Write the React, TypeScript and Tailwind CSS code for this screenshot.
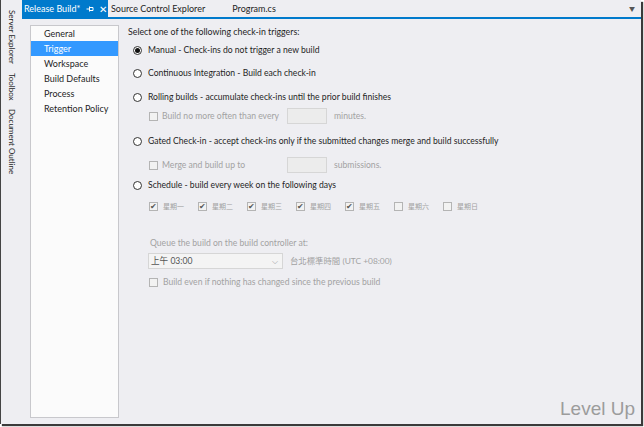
import type { ReactNode } from "react";

const font = { fontFamily: 'Lato, "Noto Sans CJK TC", sans-serif' };

function Radio({ on, children }: { on?: boolean; children: ReactNode }) {
  return (
    <div className="flex h-[14px] items-center whitespace-nowrap text-[8.6px] text-[#1e1e1e]">
      <span className="ml-[5px] mr-[6px] flex h-[9px] w-[9px] shrink-0 items-center justify-center rounded-full border border-[#333] bg-white">
        {on && <span className="h-[5px] w-[5px] rounded-full bg-[#111]" />}
      </span>
      {children}
    </div>
  );
}

function Box({ checked }: { checked?: boolean }) {
  return (
    <span className="flex h-[9px] w-[9px] shrink-0 items-center justify-center border border-[#b4b4b4] bg-[#f2f2f2] text-[8px] leading-none text-[#555]">
      {checked && "✔"}
    </span>
  );
}

function SubRow({ label, unit, mt }: { label: string; unit: string; mt: string }) {
  return (
    <div className={`flex h-[16px] items-center whitespace-nowrap text-[8.6px] text-[#a2a2a2] ${mt}`}>
      <span className="ml-[21px]"><Box /></span>
      <span className="ml-[4px] w-[125px] shrink-0">{label}</span>
      <span className="h-[16px] w-[40px] shrink-0 border border-[#d6d6d6] bg-[#ececec]" />
      <span className="ml-[7px]">{unit}</span>
    </div>
  );
}

const days: [string, boolean][] = [
  ["星期一", true],
  ["星期二", true],
  ["星期三", true],
  ["星期四", true],
  ["星期五", true],
  ["星期六", false],
  ["星期日", false],
];

const pages = ["General", "Trigger", "Workspace", "Build Defaults", "Process", "Retention Policy"];

export default function App() {
  return (
    <div className="h-[427px] w-[644px] bg-white" style={font}>
      <div className="relative flex h-[424px] w-[641px] border-l border-[#444] bg-[#eeeef2] shadow-[2px_2px_1px_#3a3a3a]">
        {/* tool window strip */}
        <div className="flex w-[21px] shrink-0 flex-col items-center gap-[9px] pt-[10px] text-[8px] text-[#1e1e1e]">
          <span className="whitespace-nowrap [writing-mode:vertical-rl]">Server Explorer</span>
          <span className="whitespace-nowrap [writing-mode:vertical-rl]">Toolbox</span>
          <span className="whitespace-nowrap [writing-mode:vertical-rl]">Document Outline</span>
        </div>

        <div className="flex flex-1 flex-col">
          {/* document tabs */}
          <div className="flex h-[19px] items-stretch whitespace-nowrap border-b-2 border-[#007acc] pr-[5px]">
            <div className="flex w-[86px] items-center bg-[#007acc] pl-[2px] text-[9px] text-white">
              <span>Release Build*</span>
              <svg className="ml-[6px]" width="8" height="8" viewBox="0 0 8 8" fill="none" stroke="white" strokeWidth="1">
                <path d="M0.5 4h3M3.5 1.5v5M3.5 2.5h3.5v3H3.5" />
              </svg>
              <span className="ml-[5px] text-[10px] leading-none">✕</span>
            </div>
            <div className="ml-[3px] flex items-center text-[9px] text-[#1e1e1e]">Source Control Explorer</div>
            <div className="ml-[27px] flex items-center text-[9px] text-[#1e1e1e]">Program.cs</div>
            <div className="ml-auto flex items-center pr-[1px] text-[6px] text-[#555]">▼</div>
          </div>

          <div className="flex flex-1 pb-[6px] pl-[8px] pt-[6px]">
            {/* page list */}
            <div className="w-[89px] shrink-0 border border-[#c8c8cc] bg-[#fbfbfb] text-[9px] text-[#1e1e1e]">
              {pages.map((p) => (
                <div
                  key={p}
                  className={`flex h-[15px] items-center whitespace-nowrap pl-[13px] ${p === "Trigger" ? "bg-[#3399ff] text-white" : ""}`}
                >
                  {p}
                </div>
              ))}
            </div>

            {/* trigger settings */}
            <div className="flex flex-1 flex-col pl-[9px]">
              <div className="flex h-[14px] items-center text-[8.8px] text-[#1e1e1e]">
                Select one of the following check-in triggers:
              </div>
              <div className="mt-[4px]"><Radio on>Manual - Check-ins do not trigger a new build</Radio></div>
              <div className="mt-[9px]"><Radio>Continuous Integration - Build each check-in</Radio></div>
              <div className="mt-[10px]"><Radio>Rolling builds - accumulate check-ins until the prior build finishes</Radio></div>
              <SubRow label="Build no more often than every" unit="minutes." mt="mt-[4px]" />
              <div className="mt-[10px]">
                <Radio>Gated Check-in - accept check-ins only if the submitted changes merge and build successfully</Radio>
              </div>
              <SubRow label="Merge and build up to" unit="submissions." mt="mt-[9px]" />
              <div className="mt-[5px]"><Radio>Schedule - build every week on the following days</Radio></div>
              <div className="ml-[21px] mt-[7px] flex h-[14px] items-center whitespace-nowrap text-[7px] text-[#a2a2a2]">
                {days.map(([d, c]) => (
                  <div key={d} className="flex w-[49px] items-center gap-[5px]">
                    <Box checked={c} />
                    <span>{d}</span>
                  </div>
                ))}
              </div>
              <div className="ml-[22px] mt-[23px] flex h-[14px] items-center text-[8.6px] text-[#a2a2a2]">
                Queue the build on the build controller at:
              </div>
              <div className="ml-[20px] mt-[3px] flex h-[16px] items-center whitespace-nowrap text-[8.6px]">
                <div className="flex h-[16px] w-[135px] items-center justify-between border border-[#d6d6d6] bg-[#f4f4f4] pl-[2px] pr-[4px] text-[#555]">
                  <span>上午 03:00</span>
                  <span className="text-[8px] text-[#999]">⌵</span>
                </div>
                <span className="ml-[7px] text-[8.4px] text-[#a2a2a2]">台北標準時間 (UTC +08:00)</span>
              </div>
              <div className="ml-[21px] mt-[6px] flex h-[14px] items-center gap-[5px] whitespace-nowrap text-[8.6px] text-[#a2a2a2]">
                <Box />
                <span>Build even if nothing has changed since the previous build</span>
              </div>
            </div>
          </div>
        </div>

        <div
          className="absolute bottom-[1px] right-[6px] text-[19px] text-[#9c9c9c]"
          style={{ fontFamily: '"Liberation Sans", Arial, sans-serif' }}
        >
          Level Up
        </div>
      </div>
    </div>
  );
}
